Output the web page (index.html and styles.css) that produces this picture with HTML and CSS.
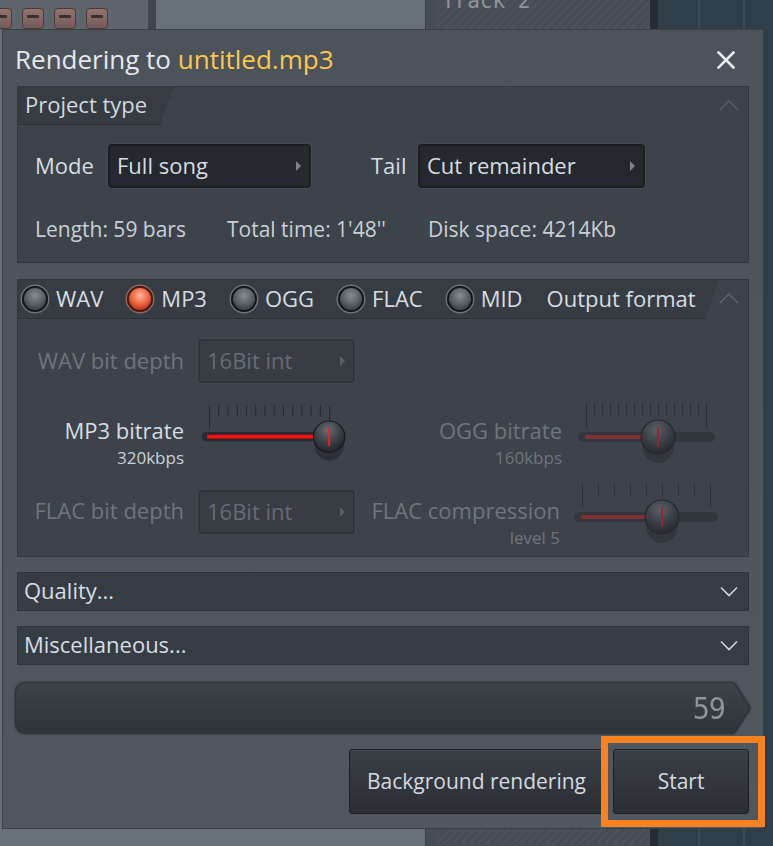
FILE: index.html
```html
<!DOCTYPE html>
<html>
<head>
<meta charset="utf-8">
<link rel="stylesheet" href="styles.css">
</head>
<body>
<div class="desktop">
  <div class="col-left">
    <div class="mixer">
      <span class="fader"></span><span class="fader"></span><span class="fader"></span><span class="fader"></span>
    </div>
    <div class="mixer-sep"></div>
  </div>
  <div class="col-sep"></div>
  <div class="col-track"><span class="track-name">Track 2</span></div>
  <div class="col-sep2"></div>
  <div class="col-teal">
    <span class="vline"></span><span class="vline v2"></span>
  </div>
</div>

<div class="dialog">
  <div class="titlebar">
    <span class="title">Rendering to <span class="file">untitled.mp3</span></span>
    <svg class="close" width="18" height="18" viewBox="0 0 18 18"><path d="M1.5 1.5 L16.5 16.5 M16.5 1.5 L1.5 16.5" stroke="#e8ecef" stroke-width="2.6" stroke-linecap="square"/></svg>
  </div>

  <section class="panel project">
    <div class="panel-head">
      <div class="tab">Project type</div>
      <svg class="chev-up" width="20" height="12" viewBox="0 0 20 12"><path d="M1 11 L10 2 L19 11" fill="none" stroke="#59606a" stroke-width="1.4"/></svg>
    </div>
    <div class="mode-row">
      <span class="lbl mode-lbl">Mode</span>
      <div class="dropdown dd-mode">Full song<i class="tri"></i></div>
      <span class="lbl tail-lbl">Tail</span>
      <div class="dropdown dd-tail">Cut remainder<i class="tri"></i></div>
    </div>
    <div class="info-row">
      <span class="i1">Length: 59 bars</span>
      <span class="i2">Total time: 1'48''</span>
      <span class="i3">Disk space: 4214Kb</span>
    </div>
  </section>

  <section class="panel output">
    <div class="panel-head">
      <div class="tab tab-wide">
        <label class="radio"><span class="dot"></span>WAV</label>
        <label class="radio"><span class="dot on"></span>MP3</label>
        <label class="radio"><span class="dot"></span>OGG</label>
        <label class="radio"><span class="dot"></span>FLAC</label>
        <label class="radio"><span class="dot"></span>MID</label>
        <span class="of-title">Output format</span>
      </div>
      <svg class="chev-up" width="20" height="12" viewBox="0 0 20 12"><path d="M1 11 L10 2 L19 11" fill="none" stroke="#5f666e" stroke-width="1.4"/></svg>
    </div>
    <div class="out-grid">
      <div class="cell-lbl r1 disabled"><span class="ltitle">WAV bit depth</span></div>
      <div class="cell-ctl r1"><div class="dropdown dis">16Bit int<i class="tri"></i></div></div>
      <div class="cell-lbl r1"></div>
      <div class="cell-ctl r1"></div>

      <div class="cell-lbl r2"><span class="ltitle">MP3 bitrate</span><span class="lsub">320kbps</span></div>
      <div class="cell-ctl r2">
        <svg class="slider" width="170" height="66" viewBox="0 0 170 66">
          <defs>
            <radialGradient id="kn" cx="0.45" cy="0.3" r="0.75">
              <stop offset="0" stop-color="#676d73"/>
              <stop offset="0.55" stop-color="#3a3f44"/>
              <stop offset="1" stop-color="#1d2023"/>
            </radialGradient>
          </defs>
          <g stroke="#23272b" stroke-width="1">
            <path d="M12.5 3V28 M22.5 3V15 M32.5 3V15 M42.5 3V15 M52.5 3V15 M62.5 3V15 M72.5 3V15 M82.5 3V15 M92.5 3V15 M102.5 3V15 M112.5 3V15 M122.5 3V15 M132.5 3V15 M142.5 3V28"/>
          </g>
          <rect x="4" y="32" width="153" height="10" rx="5" fill="#272b2f"/>
          <rect x="10" y="35" width="124" height="4" fill="#ff0d0d"/>
          <ellipse cx="142" cy="46" rx="16" ry="17" fill="#2c3035" opacity="0.9"/>
          <circle cx="142" cy="37" r="17" fill="url(#kn)" stroke="#16181b" stroke-width="1.2"/>
          <path d="M142 27V47" stroke="#ff1a1a" stroke-width="2"/>
        </svg>
      </div>
      <div class="cell-lbl r2 disabled"><span class="ltitle">OGG bitrate</span><span class="lsub">160kbps</span></div>
      <div class="cell-ctl r2 disabled">
        <svg class="slider" width="150" height="66" viewBox="0 0 150 66">
          <g stroke="#2a2e33" stroke-width="1">
            <path d="M10.5 3V28 M18.5 3V15 M26.5 3V15 M34.5 3V15 M42.5 3V15 M50.5 3V15 M58.5 3V15 M66.5 3V15 M74.5 3V15 M82.5 3V15 M90.5 3V15 M98.5 3V15 M106.5 3V15 M114.5 3V15 M122.5 3V15 M130.5 3V28"/>
          </g>
          <rect x="2" y="32" width="137" height="10" rx="5" fill="#30353a"/>
          <rect x="9" y="35" width="65" height="4" fill="#8e2d31"/>
          <ellipse cx="82" cy="46" rx="16" ry="17" fill="#31363b"/>
          <circle cx="82" cy="37" r="17" fill="url(#kn)" stroke="#1f2225" stroke-width="1.2" opacity="0.85"/>
          <path d="M82 27V47" stroke="#a0262a" stroke-width="2"/>
        </svg>
      </div>

      <div class="cell-lbl r3 disabled"><span class="ltitle">FLAC bit depth</span></div>
      <div class="cell-ctl r3"><div class="dropdown dis dd-flac">16Bit int<i class="tri"></i></div></div>
      <div class="cell-lbl r3 disabled"><span class="ltitle nar">FLAC compression</span><span class="lsub nar">level 5</span></div>
      <div class="cell-ctl r3 disabled">
        <svg class="slider sl-flac" width="150" height="66" viewBox="0 0 150 66">
          <g stroke="#2a2e33" stroke-width="1">
            <path d="M8.5 3V28 M24.5 3V15 M40.5 3V15 M56.5 3V15 M72.5 3V15 M88.5 3V15 M104.5 3V15 M120.5 3V15 M136.5 3V28"/>
          </g>
          <rect x="0" y="32" width="144" height="10" rx="5" fill="#30353a"/>
          <rect x="7" y="35" width="70" height="4" fill="#8e2d31"/>
          <ellipse cx="88" cy="46" rx="16" ry="17" fill="#31363b"/>
          <circle cx="88" cy="37" r="17" fill="url(#kn)" stroke="#1f2225" stroke-width="1.2" opacity="0.85"/>
          <path d="M88 27V47" stroke="#a0262a" stroke-width="2"/>
        </svg>
      </div>
    </div>
  </section>

  <div class="fold">Quality...<svg width="18" height="11" viewBox="0 0 18 11"><path d="M1 1.5 L9 9.5 L17 1.5" fill="none" stroke="#cdd4da" stroke-width="1.6"/></svg></div>
  <div class="fold">Miscellaneous...<svg width="18" height="11" viewBox="0 0 18 11"><path d="M1 1.5 L9 9.5 L17 1.5" fill="none" stroke="#cdd4da" stroke-width="1.6"/></svg></div>

  <div class="progress-wrap"><div class="progress"><span class="pnum">59</span></div></div>

  <div class="buttons">
    <button class="btn bg">Background rendering</button>
    <button class="btn start">Start</button>
  </div>
</div>
<div class="highlight"></div>
</body>
</html>
```
FILE: styles.css
```css
* { box-sizing: border-box; }
html, body { margin: 0; padding: 0; }
body {
  width: 773px; height: 846px; overflow: hidden; position: relative;
  font-family: "Open Sans", "Noto Sans", sans-serif;
  background: #6a7079;
}
/* background app */
.desktop { display: flex; height: 846px; }
.col-left { width: 425px; background: #687079; display: flex; align-items: flex-start; }
.mixer { width: 158px; height: 30px; background: #5d646c; display: flex; gap: 10px; padding: 8px 0 0 0; margin-left: -10px; }
.fader { width: 22px; height: 21px; border-radius: 4px; background: linear-gradient(#937370, #735b5a); border: 1px solid #4a3a3a; }
.fader::after { content: ""; display: block; margin: 6px 4px 0; height: 3px; background: #3c3131; border-radius: 1px; }
.mixer-sep { width: 8px; height: 60px; background: #3f454c; }
.col-sep { width: 12px; background: #474d54; border-left: 1px solid #3a3f45; }
.col-track { width: 213px; background: repeating-linear-gradient(135deg, #4b5158 0 3px, #474d54 3px 6px); overflow: hidden; }
.track-name { display: block; margin: -12px 0 0 5px; font-family: "DejaVu Sans Mono", monospace; font-size: 21px; line-height: 26px; color: #8e969d; }
.col-sep2 { width: 8px; background: #262c33; }
.col-teal { flex: 1; background: #2f3e49; display: flex; }
.vline { width: 2px; background: #3a4a55; margin-left: 40px; }
.v2 { margin-left: 43px; }

/* dialog */
.dialog {
  position: absolute; left: 2px; top: 29px; width: 762px; height: 800px;
  background: linear-gradient(#4c535b, #50575f);
  border: 1px solid #3a3f46;
  padding: 0 14px 0 14px;
  display: flex; flex-direction: column;
  color: #d3dae0;
  font-size: 22px;
}
.titlebar { height: 56px; display: flex; align-items: center; justify-content: space-between; padding: 0 14px 0 0; margin-left: -2px; }
.title { font-size: 26px; color: #e4e9ed; margin-top: 1px; }
.file { color: #fbc94a; }
.close { margin-top: 4px; }

.panel { background: #3d434a; border: 1px solid #33383e; }
.panel-head { display: flex; align-items: stretch; justify-content: space-between; height: 38px; }
.tab {
  background: #363c42; width: 156px; padding: 0 0 3px 7px;
  display: flex; align-items: center;
  clip-path: polygon(0 0, 100% 0, calc(100% - 14px) 100%, 0 100%);
  border-bottom: 1px solid #2d3237;
  color: #d2d9df; font-size: 22px;
}
.chev-up { margin: 12px 9px 0 0; }
.project { height: 177px; }
.mode-row { display: flex; align-items: center; margin-top: 19px; padding-left: 17px; height: 44px; }
.lbl { color: #d6dde3; margin-top: -3px; }
.mode-lbl { width: 73px; }
.tail-lbl { margin-left: 60px; width: 47px; }
.dropdown {
  height: 44px; background: #25292d; border: 2px solid #1c1f22; border-radius: 4px;
  box-shadow: 0 0 0 1px #454b52;
  display: flex; align-items: center; justify-content: space-between;
  padding: 0 8px 3px 7px; color: #d6dde3; font-size: 22px;
}
.tri { width: 0; height: 0; border-left: 5px solid #7c838a; border-top: 5px solid transparent; border-bottom: 5px solid transparent; margin-top: 3px; }
.dd-mode { width: 203px; }
.dd-tail { width: 227px; }
.info-row { display: flex; padding-left: 17px; margin-top: 27px; height: 28px; align-items: center; color: #c9d0d6; font-size: 21px; }
.i1 { width: 192px; }
.i2 { width: 201px; }

.output { margin-top: 16px; height: 278px; }
.output .panel-head { height: 39px; }
.tab-wide { width: 706px; padding-left: 4px; padding-bottom: 1px; border-bottom: 1px solid #2d3237; }
.radio { display: flex; align-items: center; margin-right: 24px; color: #d6dde3; font-size: 22px; margin-top: -2px; }
.dot {
  width: 26px; height: 26px; border-radius: 50%; margin-right: 8px;
  background: radial-gradient(circle at 50% 35%, #858c92 0, #5d646a 45%, #42484e 70%);
  border: 2px solid #16181b;
  box-shadow: 0 0 0 1.5px #6d7379;
  margin-top: 2px;
}
.dot.on {
  background: radial-gradient(circle at 50% 35%, #ffb59a 0, #f06a47 45%, #c23a1f 75%);
  border-color: #4a1a12;
  box-shadow: 0 0 0 1.5px #8a6a64;
}
.of-title { color: #d6dde3; margin-top: -2px; }

.out-grid { display: grid; grid-template-columns: 180px 157px 221px 150px; grid-template-rows: 44px 97px 76px; margin-top: 20px; }
.cell-lbl { display: flex; flex-direction: column; align-items: flex-end; padding-right: 14px; text-align: right; }
.r1.cell-lbl { justify-content: center; padding-bottom: 2px; }
.r2.cell-lbl { padding-top: 35px; }
.r3.cell-lbl { padding-top: 18px; }
.r2.cell-ctl { padding-top: 17px; }
.ltitle { font-size: 22px; line-height: 24px; color: #d6dde3; }
.lsub { font-size: 17px; line-height: 20px; margin-top: 6px; color: #c9d0d6; }
.disabled .ltitle, .disabled .lsub { color: #6e757c; }
.nar { margin-right: 2px; }
.cell-ctl { display: flex; align-items: flex-start; }
.dd-flac { margin-top: 10px; }
.slider { display: block; }
.cell-ctl.disabled .slider { opacity: 0.85; }
.sl-flac { margin-left: -2px; }
.dropdown.dis { width: 157px; background: #383d43; border-color: #30353a; box-shadow: 0 0 0 1px #434950; color: #656c73; }
.dropdown.dis .tri { border-left-color: #585f66; }

.fold {
  margin-top: 15px; height: 39px; background: #363c43; border: 1px solid #2f343a;
  display: flex; align-items: center; justify-content: space-between;
  padding: 0 10px 3px 6px; color: #d6dde3; font-size: 22px;
}
.fold svg { margin-top: 3px; }
.progress-wrap { margin: 18px 0 0 -1px; width: 734px; filter: drop-shadow(0 0 1px #1c1f23) drop-shadow(0 0 1px #1c1f23); }
.progress {
  height: 50px; background: linear-gradient(#3d4248, #2f3439);
  border-radius: 9px 0 0 9px;
  clip-path: polygon(0 0, calc(100% - 16px) 0, 100% 50%, calc(100% - 16px) 100%, 0 100%);
  display: flex; align-items: center; justify-content: flex-end; padding-right: 25px;
}
.pnum { font-family: "DejaVu Sans Condensed", "DejaVu Sans", sans-serif; font-stretch: condensed; font-weight: 200; font-size: 30px; color: #8d959c; letter-spacing: -1px; }

.buttons { display: flex; justify-content: flex-end; gap: 9px; margin-top: 16px; }
.btn {
  height: 65px; border-radius: 3px; border: 1px solid #1d2023;
  background: linear-gradient(#3a3f45, #2b2f34);
  box-shadow: inset 0 1px 0 #464c52;
  color: #d3dae0; font-family: "Open Sans", "Noto Sans", sans-serif; font-size: 21px;
  padding-bottom: 2px;
}
.btn.bg { width: 255px; }
.btn.start { width: 136px; }

.highlight { position: absolute; left: 601px; top: 736px; width: 164px; height: 91px; border: 7px solid #f7821f; }
```
